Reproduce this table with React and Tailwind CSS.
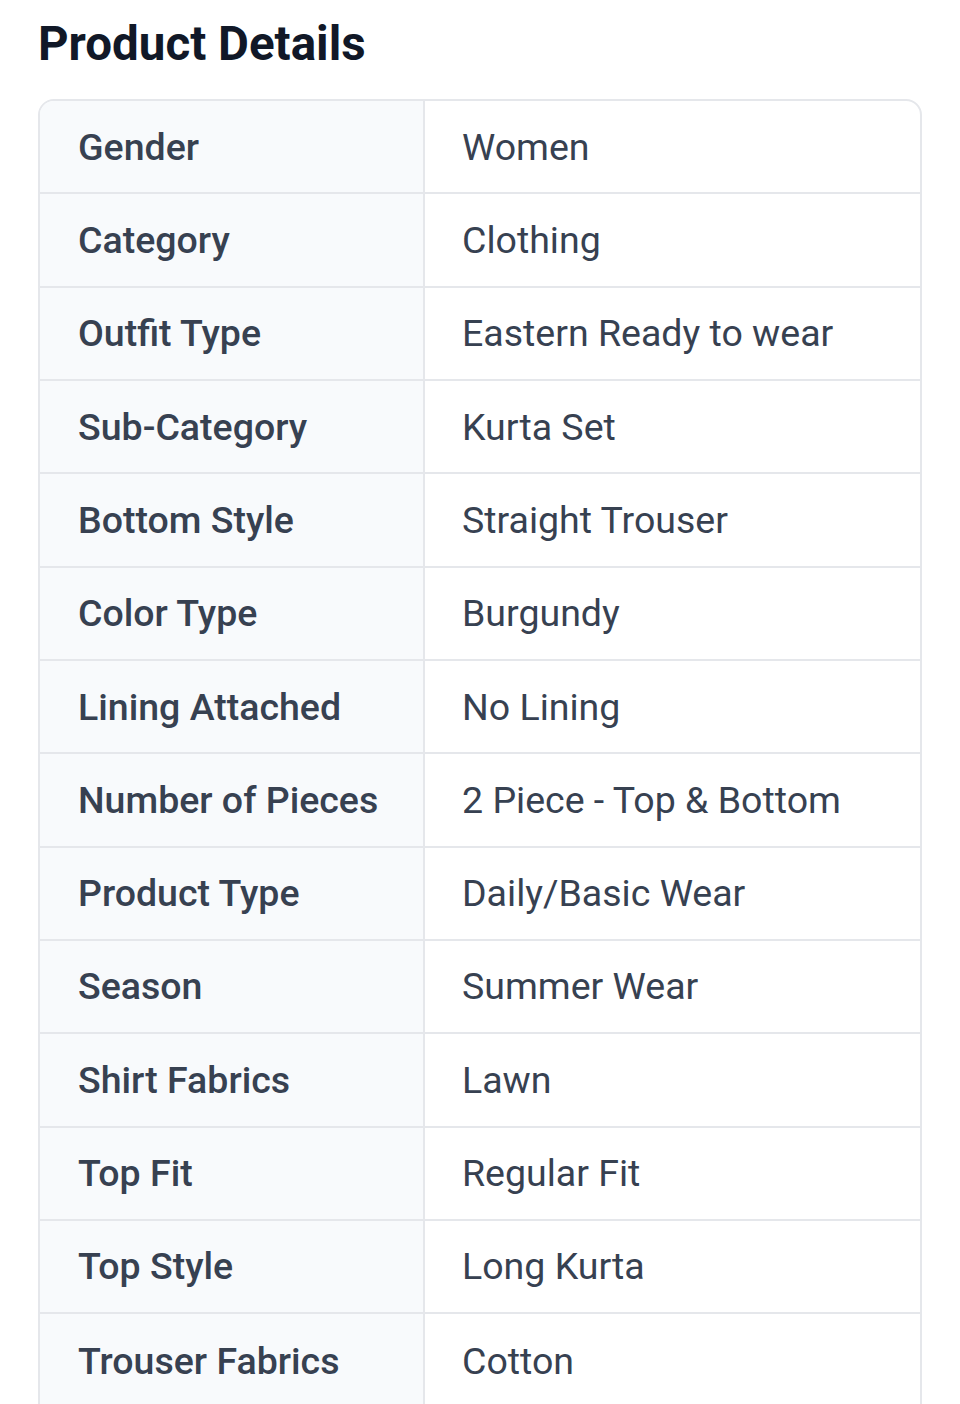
import React from "react";

const DETAILS = [
  { label: "Gender", value: "Women" },
  { label: "Category", value: "Clothing" },
  { label: "Outfit Type", value: "Eastern Ready to wear" },
  { label: "Sub-Category", value: "Kurta Set" },
  { label: "Bottom Style", value: "Straight Trouser" },
  { label: "Color Type", value: "Burgundy" },
  { label: "Lining Attached", value: "No Lining" },
  { label: "Number of Pieces", value: "2 Piece - Top & Bottom" },
  { label: "Product Type", value: "Daily/Basic Wear" },
  { label: "Season", value: "Summer Wear" },
  { label: "Shirt Fabrics", value: "Lawn" },
  { label: "Top Fit", value: "Regular Fit" },
  { label: "Top Style", value: "Long Kurta" },
  { label: "Trouser Fabrics", value: "Cotton" },
];

const App = () => {
  return (
    <div className="w-full bg-white px-[38px] pt-[16px] pb-10 font-['Roboto',sans-serif]">
      <h2 className="text-[47.5px] leading-[56px] font-bold text-[#111827]">
        Product Details
      </h2>

      <div className="mt-[27px] border-2 border-[#e5e7eb] rounded-t-[16px] overflow-hidden">
        {DETAILS.map((row) => (
          <div
            key={row.label}
            className="flex h-[93.33px] border-b-2 border-[#e5e7eb] last:border-b-0"
          >
            <div className="w-[385px] shrink-0 flex items-center pl-[38px] bg-[#f8fafc] border-r-2 border-[#e5e7eb]">
              <span className="text-[37.5px] font-medium text-[#374151]">
                {row.label}
              </span>
            </div>
            <div className="flex-1 flex items-center pl-[37px]">
              <span className="text-[37.5px] text-[#374151]">{row.value}</span>
            </div>
          </div>
        ))}
      </div>
    </div>
  );
};

export default App;
